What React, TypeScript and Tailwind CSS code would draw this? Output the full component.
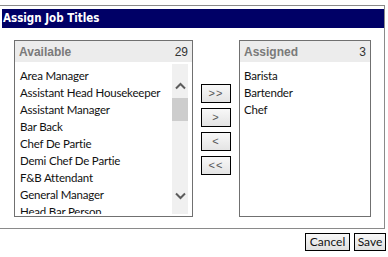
import React from "react";

const available = [
  "Area Manager",
  "Assistant Head Housekeeper",
  "Assistant Manager",
  "Bar Back",
  "Chef De Partie",
  "Demi Chef De Partie",
  "F&B Attendant",
  "General Manager",
  "Head Bar Person",
];
const assigned = ["Barista", "Bartender", "Chef"];

function Chevron({ up }: { up?: boolean }) {
  return (
    <svg width="11" height="8" viewBox="0 0 11 8">
      <path
        d={up ? "M1 6.5 L5.5 2 L10 6.5" : "M1 1.5 L5.5 6 L10 1.5"}
        fill="none"
        stroke="#5c5c5c"
        strokeWidth="2"
      />
    </svg>
  );
}

function MoveBtn({ label }: { label: string }) {
  return (
    <button className="w-[30px] h-[19px] border border-black bg-gradient-to-b from-[#f8f8f8] to-[#e4e4e4] text-[11px] leading-none text-[#555] font-['Liberation_Sans',sans-serif] tracking-[1px] flex items-center justify-center pb-[1px]">
      {label}
    </button>
  );
}

export default function App() {
  return (
    <div className="w-[388px] h-[257px] bg-white font-['Lato',sans-serif] overflow-hidden">
      <div className="mt-[5px] w-[385px] h-[224px] border-t border-r border-b border-[#8a8a8a] pt-[3px]">
        <div className="ml-[2px] w-[382px] h-[19px] bg-[#000066] text-white font-bold text-[11.5px] leading-[19px] pl-[1px] font-['DejaVu_Sans_Condensed','DejaVu_Sans',sans-serif]">
          Assign Job Titles
        </div>
        <div className="flex mt-[12px]">
          <div className="ml-[14px] w-[179px] h-[177px] border border-[#707070] flex flex-col">
            <div className="h-[21px] bg-[#ececec] flex items-center justify-between px-[4px] font-['Liberation_Sans',sans-serif]">
              <span className="text-[12px] font-bold text-[#7a7a7a]">Available</span>
              <span className="text-[12px] text-[#333]">29</span>
            </div>
            <div className="flex flex-1 min-h-0 pt-[2px] pb-[2px] pr-[4px]">
              <div className="flex-1 overflow-hidden pl-[5px] pt-[3px]">
                {available.map((t) => (
                  <div key={t} className="h-[17px] leading-[17px] text-[11.5px] tracking-[-0.2px] text-[#111] whitespace-nowrap">
                    {t}
                  </div>
                ))}
              </div>
              <div className="w-[16px] bg-[#f0f0f0] flex flex-col items-center">
                <div className="h-[34px] flex items-center justify-center pt-[10px]">
                  <Chevron up />
                </div>
                <div className="w-[16px] h-[23px] bg-[#cdcdcd]" />
                <div className="flex-1" />
                <div className="h-[30px] flex items-center justify-center pb-[6px]">
                  <Chevron />
                </div>
              </div>
            </div>
          </div>
          <div className="ml-[8px] w-[30px] flex flex-col gap-[5px] pt-[44px]">
            <MoveBtn label=">>" />
            <MoveBtn label=">" />
            <MoveBtn label="<" />
            <MoveBtn label="<<" />
          </div>
          <div className="ml-[8px] w-[132px] h-[177px] border border-[#707070] flex flex-col">
            <div className="h-[21px] bg-[#ececec] flex items-center justify-between px-[4px] font-['Liberation_Sans',sans-serif]">
              <span className="text-[12px] font-bold text-[#7a7a7a]">Assigned</span>
              <span className="text-[12px] text-[#333]">3</span>
            </div>
            <div className="pl-[4px] pt-[5px]">
              {assigned.map((t) => (
                <div key={t} className="h-[17px] leading-[17px] text-[11.5px] tracking-[-0.2px] text-[#111]">
                  {t}
                </div>
              ))}
            </div>
          </div>
        </div>
      </div>
      <div className="flex justify-end gap-[4px] pr-[2px] mt-[4px]">
        <button className="w-[45px] h-[18px] border border-black bg-gradient-to-b from-[#f8f8f8] to-[#e0e0e0] text-[12px] leading-none text-[#111]">
          Cancel
        </button>
        <button className="w-[32px] h-[18px] border border-black bg-gradient-to-b from-[#f8f8f8] to-[#e0e0e0] text-[12px] leading-none text-[#111]">
          Save
        </button>
      </div>
    </div>
  );
}
